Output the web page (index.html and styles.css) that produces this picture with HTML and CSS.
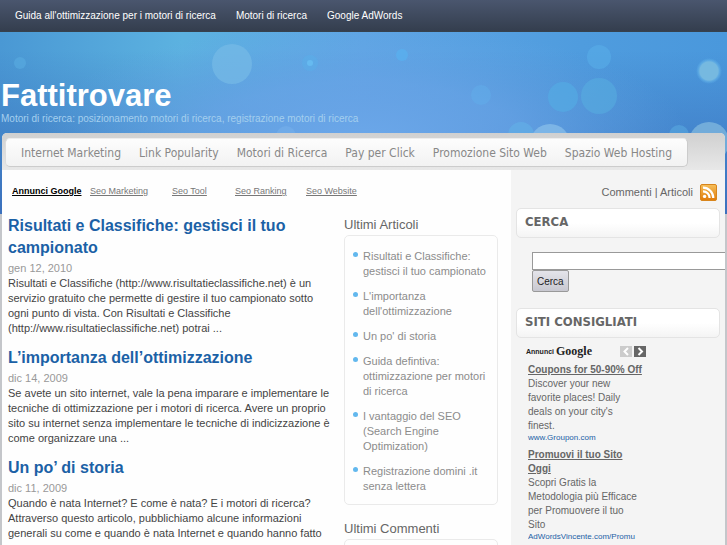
FILE: index.html
```html
<!DOCTYPE html>
<html lang="it">
<head>
  <meta charset="UTF-8">
  <meta name="viewport" content="width=device-width, initial-scale=1.0">
  <title>Fattitrovare</title>
  <link rel="stylesheet" href="styles.css">
</head>
<body>
  <div class="top-menu">
    <a href="#">Guida all'ottimizzazione per i motori di ricerca</a>
    <a href="#">Motori di ricerca</a>
    <a href="#">Google AdWords</a>
  </div>

  <div class="page">
    <svg class="sky" viewBox="0 0 727 182" preserveAspectRatio="none" aria-hidden="true">
      <defs>
        <linearGradient id="base" x1="0" y1="0" x2="1" y2="0">
          <stop offset="0" stop-color="#4a98d4"/>
          <stop offset="0.25" stop-color="#5cb2e0"/>
          <stop offset="0.5" stop-color="#5fa5e4"/>
          <stop offset="0.8" stop-color="#4f9cde"/>
          <stop offset="1" stop-color="#4a98dc"/>
        </linearGradient>
        <linearGradient id="shade" x1="0" y1="0" x2="0" y2="1">
          <stop offset="0.1" stop-color="#3c70bc" stop-opacity="0"/>
          <stop offset="1" stop-color="#3a6cba" stop-opacity="0.9"/>
        </linearGradient>
        <radialGradient id="light">
          <stop offset="0" stop-color="#6ca8ea"/>
          <stop offset="0.5" stop-color="#6aa6e8" stop-opacity="0.7"/>
          <stop offset="1" stop-color="#62a4e4" stop-opacity="0"/>
        </radialGradient>
        <radialGradient id="glow">
          <stop offset="0.7" stop-color="#76b9e0"/>
          <stop offset="0.8" stop-color="#6cb8e8" stop-opacity="0.6"/>
          <stop offset="1" stop-color="#5cb4ee" stop-opacity="0"/>
        </radialGradient>
      </defs>
      <rect width="727" height="182" fill="url(#base)"/>
      <rect width="727" height="182" fill="url(#shade)"/>
      <ellipse cx="360" cy="110" rx="330" ry="120" fill="url(#light)"/>
      <circle cx="232" cy="32" r="20" fill="#78bce6" opacity="0.65"/>
      <circle cx="20" cy="31" r="6" fill="#5cb0e4" opacity="0.5"/>
      <circle cx="310" cy="31" r="8" fill="#58b2ec" opacity="0.4"/>
      <circle cx="310" cy="31" r="3" fill="#66baf0"/>
      <circle cx="402" cy="23" r="6" fill="#58b0f0" opacity="0.7"/>
      <circle cx="481" cy="63" r="10" fill="#62b0ea" opacity="0.45"/>
      <circle cx="563" cy="65" r="15" fill="#54aee4" opacity="0.6"/>
      <circle cx="599" cy="64" r="18" fill="#58aee0" opacity="0.55"/>
      <circle cx="599" cy="25" r="12" fill="#58aee8" opacity="0.6"/>
      <circle cx="709" cy="39" r="13" fill="url(#glow)"/>
      <circle cx="521" cy="103" r="13" fill="#62b2e8" opacity="0.55"/>
      <circle cx="550" cy="112" r="20" fill="#84bce8" opacity="0.8"/>
      <circle cx="679" cy="103" r="10" fill="#58a8e0" opacity="0.6"/>
      <circle cx="709" cy="110" r="20" fill="#82b8de" opacity="0.75"/>
      <circle cx="286" cy="104" r="10" fill="#78b2ec" opacity="0.5"/>
    </svg>

    <div class="header">
      <h1>Fattitrovare</h1>
      <p>Motori di ricerca: posizionamento motori di ricerca, registrazione motori di ricerca</p>
    </div>

    <div class="wrap">
      <div class="nav-bar">
        <div class="nav">
          <a href="#">Internet Marketing</a>
          <a href="#">Link Popularity</a>
          <a href="#">Motori di Ricerca</a>
          <a href="#">Pay per Click</a>
          <a href="#">Promozione Sito Web</a>
          <a href="#">Spazio Web Hosting</a>
        </div>
      </div>

      <div class="columns">
        <div class="content">
          <div class="links">
            <a class="links-title" href="#">Annunci Google</a>
            <a href="#">Seo Marketing</a>
            <a href="#">Seo Tool</a>
            <a href="#">Seo Ranking</a>
            <a href="#">Seo Website</a>
          </div>

          <div class="inner">
            <div class="posts">
              <div class="post">
                <h2><a href="#">Risultati e Classifiche: gestisci il tuo campionato</a></h2>
                <div class="date">gen 12, 2010</div>
                <p>Risultati e Classifiche (http://www.risultatieclassifiche.net) è un<br>
                servizio gratuito che permette di gestire il tuo campionato sotto<br>
                ogni punto di vista. Con Risultati e Classifiche<br>
                (http://www.risultatieclassifiche.net) potrai ...</p>
              </div>
              <div class="post">
                <h2><a href="#">L’importanza dell’ottimizzazione</a></h2>
                <div class="date">dic 14, 2009</div>
                <p>Se avete un sito internet, vale la pena imparare e implementare le<br>
                tecniche di ottimizzazione per i motori di ricerca. Avere un proprio<br>
                sito su internet senza implementare le tecniche di indicizzazione è<br>
                come organizzare una ...</p>
              </div>
              <div class="post">
                <h2><a href="#">Un po’ di storia</a></h2>
                <div class="date">dic 11, 2009</div>
                <p>Quando è nata Internet? E come è nata? E i motori di ricerca?<br>
                Attraverso questo articolo, pubblichiamo alcune informazioni<br>
                generali su come e quando è nata Internet e quando hanno fatto</p>
              </div>
            </div>

            <div class="recent">
              <h3>Ultimi Articoli</h3>
              <ul>
                <li><a href="#">Risultati e Classifiche: gestisci il tuo campionato</a></li>
                <li><a href="#">L'importanza dell'ottimizzazione</a></li>
                <li><a href="#">Un po' di storia</a></li>
                <li><a href="#">Guida defintiva: ottimizzazione per motori di ricerca</a></li>
                <li><a href="#">I vantaggio del SEO (Search Engine Optimization)</a></li>
                <li><a href="#">Registrazione domini .it senza lettera</a></li>
              </ul>
              <h3>Ultimi Commenti</h3>
              <ul></ul>
            </div>
          </div>
        </div>

        <div class="sidebar">
          <div class="feeds">
            <span><a href="#">Commenti</a> | <a href="#">Articoli</a></span>
            <svg width="17" height="17" viewBox="0 0 17 17" aria-hidden="true">
              <defs>
                <linearGradient id="rss" x1="0" y1="0" x2="0" y2="1">
                  <stop offset="0" stop-color="#f6c05c"/>
                  <stop offset="1" stop-color="#e07a08"/>
                </linearGradient>
              </defs>
              <rect x="0.5" y="0.5" width="16" height="16" rx="1.5" fill="url(#rss)" stroke="#d8851c"/>
              <circle cx="4.600" cy="12.400" r="1.7" fill="#fff"/>
              <path d="M3 7.400a6.600 6.600 0 0 1 6.600 6.600M3 3.700A10.300 10.300 0 0 1 13.300 14" fill="none" stroke="#fff" stroke-width="2.2"/>
            </svg>
          </div>

          <h4>CERCA</h4>
          <form class="search">
            <input type="text" aria-label="Cerca">
            <button type="submit">Cerca</button>
          </form>

          <h4>SITI CONSIGLIATI</h4>
          <div class="ads">
            <div class="ads-head">
              <span class="ads-label">Annunci</span>
              <span class="ads-logo">Google</span>
              <button class="arrow arrow-off" aria-label="Precedente">
                <svg width="12" height="11" viewBox="0 0 12 11"><path d="M8 2L4.500 5.500L8 9" fill="none" stroke="#fff" stroke-width="2"/></svg>
              </button>
              <button class="arrow" aria-label="Successivo">
                <svg width="12" height="11" viewBox="0 0 12 11"><path d="M4.500 2L8 5.500L4.500 9" fill="none" stroke="#fff" stroke-width="2"/></svg>
              </button>
            </div>
            <div class="ad">
              <a class="ad-title" href="#">Coupons for 50-90% Off</a>
              <p>Discover your new<br>favorite places! Daily<br>deals on your city's<br>finest.</p>
              <a class="ad-url" href="#">www.Groupon.com</a>
            </div>
            <div class="ad">
              <a class="ad-title" href="#">Promuovi il tuo Sito<br>Oggi</a>
              <p>Scopri Gratis la<br>Metodologia più Efficace<br>per Promuovere il tuo<br>Sito</p>
              <a class="ad-url ad-cut" href="#">AdWordsVincente.com/Promu</a>
            </div>
          </div>
        </div>
      </div>
    </div>
  </div>
</body>
</html>
```

FILE: styles.css
```css
html {
    height: 100%;
    overflow: hidden;
}

body {
    margin: 0;
    height: 100%;
    overflow: hidden;
    font-family: "Liberation Sans", Arial, sans-serif;
    font-size: 11px;
    color: #444;
    background: #c4c6ca;
}

h1, h2, h3, h4, p, ul {
    margin: 0;
    padding: 0;
}

a {
    color: inherit;
    text-decoration: none;
}

.top-menu {
    display: flex;
    gap: 20px;
    box-sizing: border-box;
    height: 32px;
    padding: 0 15px;
    line-height: 31px;
    font-size: 10px;
    color: #fff;
    background: linear-gradient(#4a566e, #343e4e);
    border-bottom: 1px solid #36424e;
}

.page {
    position: relative;
}

.sky {
    position: absolute;
    top: 0;
    left: 0;
    width: 100%;
    height: 182px;
}

.header {
    position: relative;
    box-sizing: border-box;
    height: 101px;
    padding: 46px 1px 0;
}

.header h1 {
    font-size: 31px;
    line-height: 36px;
    color: #fff;
}

.header p {
    font-size: 10px;
    line-height: 10px;
    color: #a4cfee;
    white-space: nowrap;
}

.wrap {
    position: relative;
    margin: 0 2px;
    border-radius: 5px 5px 0 0;
    background: #f4f4f4;
    overflow: hidden;
}

.nav-bar {
    display: flex;
    padding: 5px 3px 3px;
    background: linear-gradient(#d0d0d0, #e8e8e8);
}

.nav {
    display: flex;
    gap: 18px;
    padding: 0 15px;
    border: 1px solid #dcdcdc;
    border-color: #eee #ccc #ccc #ddd;
    border-radius: 5px;
    background: linear-gradient(#fdfdfd, #f2f2f2);
    font-family: "DejaVu Sans Condensed", "DejaVu Sans", sans-serif;
    font-size: 12px;
    line-height: 27px;
    color: #888;
    white-space: nowrap;
}

.nav a {
    padding-top: 1px;
    line-height: 26px;
}

.columns {
    display: flex;
}

.content {
    flex: 1;
    min-width: 0;
    background: #fefefe;
}

.links {
    display: grid;
    grid-template-columns: 78px 82px 63px 71px auto;
    padding: 15px 10px 0;
    font-size: 9px;
    line-height: 12px;
    color: #777;
}

.links a {
    text-decoration: underline;
    white-space: nowrap;
}

.links .links-title {
    font-weight: bold;
    color: #000;
}

.inner {
    display: flex;
    gap: 8px;
    padding: 18px 13px 0 6px;
}

.posts {
    flex: 1;
    min-width: 0;
}

.post {
    margin-bottom: 11px;
}

.post h2 {
    margin-bottom: 2px;
    font-size: 16px;
    line-height: 22px;
    color: #1b61a6;
}

.date {
    line-height: 15px;
    color: #999;
}

.post p {
    line-height: 15px;
    white-space: nowrap;
}

.recent {
    width: 154px;
}

.recent h3 {
    font-size: 13px;
    font-weight: normal;
    line-height: 20px;
    color: #666;
}

.recent ul {
    box-sizing: border-box;
    min-height: 40px;
    margin-bottom: 14px;
    padding: 13px 10px 0 18px;
    border: 1px solid #eaeaea;
    border-radius: 5px;
    list-style: none;
    line-height: 15px;
    color: #8c8c8c;
}

.recent li {
    position: relative;
    margin-bottom: 10px;
}

.recent li::before {
    content: "";
    position: absolute;
    left: -10px;
    top: 3px;
    width: 5px;
    height: 5px;
    border-radius: 50%;
    background: #62b8ee;
}

.sidebar {
    box-sizing: border-box;
    width: 214px;
    padding: 13px 5px 0 5px;
    background: #f4f4f4;
    color: #666;
}

.feeds {
    display: flex;
    justify-content: flex-end;
    align-items: center;
    gap: 7px;
    padding-right: 3px;
    margin-bottom: 7px;
    line-height: 18px;
}

.sidebar h4 {
    box-sizing: border-box;
    height: 30px;
    padding: 0 8px;
    border: 1px solid #e4e4e4;
    border-radius: 5px;
    background: linear-gradient(#fff 50%, #f4f4f4);
    font-family: "DejaVu Sans Condensed", "DejaVu Sans", sans-serif;
    font-size: 13px;
    line-height: 26px;
}

.search {
    padding: 14px 0 16px 16px;
    white-space: nowrap;
}

.search input {
    display: block;
    box-sizing: border-box;
    width: 220px;
    height: 18px;
    border: 1px solid #999;
    background: #fff;
}

.search button {
    display: block;
    box-sizing: border-box;
    height: 22px;
    padding: 0 4px;
    border: 1px solid #999;
    border-radius: 2px;
    background: linear-gradient(#e4e4ea, #c8c8d0);
    font-family: inherit;
    font-size: 10px;
    color: #222;
}

.ads {
    padding: 6px 0 0 10px;
}

.ads-head {
    display: flex;
    align-items: center;
    gap: 2px;
    height: 14px;
    color: #222;
}

.ads-label {
    font-size: 7px;
    font-weight: bold;
}

.ads-logo {
    flex: 0 0 62px;
    font-family: "Liberation Serif", serif;
    font-size: 12px;
    font-weight: bold;
}

.arrow {
    width: 12px;
    height: 11px;
    padding: 0;
    border: 0;
    background: #666;
    line-height: 0;
}

.arrow-off {
    background: #ccc;
}

.ad {
    margin: 5px 0 5px 2px;
    font-size: 10px;
    line-height: 14px;
}

.ad-title {
    display: block;
    font-weight: bold;
    text-decoration: underline;
}

.ad-url {
    display: block;
    font-size: 8px;
    line-height: 10px;
    color: #1b61a6;
}

.ad-cut {
    height: 7px;
    overflow: hidden;
}
```
